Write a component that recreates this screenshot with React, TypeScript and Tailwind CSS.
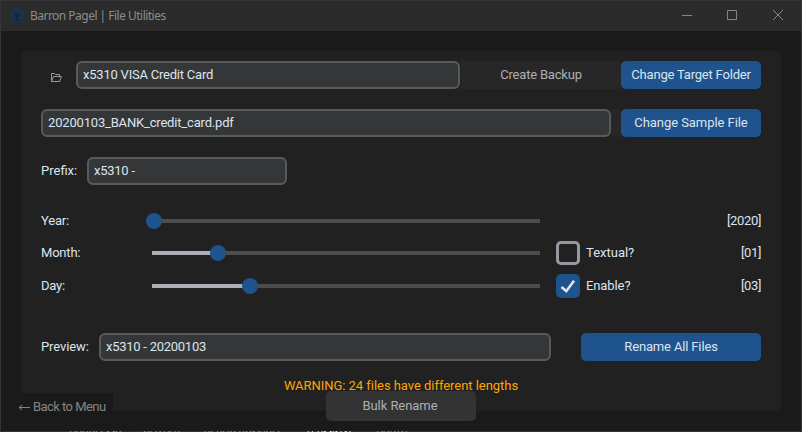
import React from "react";

function Field({ value, className }: { value: string; className: string }) {
  return (
    <div className={`flex h-7 items-center rounded-[6px] border-2 border-[#565b5e] bg-[#343638] pl-[5px] ${className}`}>
      {value}
    </div>
  );
}

function Button({ children, className }: { children: React.ReactNode; className: string }) {
  return (
    <button className={`flex h-7 items-center justify-center rounded-[5px] bg-[#1f538d] text-[#dce4ee] ${className}`}>
      {children}
    </button>
  );
}

function Slider({ value }: { value: number }) {
  return (
    <div className="relative flex h-4 w-[388px] items-center">
      <div className="h-1 w-full bg-[#4a4d50]">
        <div className="h-1 bg-[#aab0b5]" style={{ width: value }} />
      </div>
      <div className="absolute top-0 size-4 -translate-x-1/2 rounded-full bg-[#1f538d]" style={{ left: value }} />
    </div>
  );
}

function SliderRow({ label, value, reading, children }: { label: string; value: number; reading: string; children?: React.ReactNode }) {
  return (
    <div className="flex h-6 items-center">
      <div className="w-[111px] tracking-[-0.2px]">{label}</div>
      <Slider value={value} />
      <div className="ml-4 flex items-center gap-1.5">{children}</div>
      <div className="ml-auto tracking-[-0.35px]">{reading}</div>
    </div>
  );
}

export default function App() {
  return (
    <div className="relative h-[432px] w-[802px] overflow-hidden font-['Roboto',sans-serif] text-[13px] leading-4 text-[#dce4ee]">
      <div className="h-[432px] border border-[#353535] bg-[#1a1a1a]">
        <header className="flex h-[30px] items-center bg-[#2b2b2b] pl-2 text-[#8c8c8c]">
          <svg className="size-4" viewBox="0 0 16 16" fill="none">
            <circle cx="8" cy="7.5" r="7.5" fill="#19324e" />
            <path d="M8 13V7M8 9.5L4.5 7M8 9l3.5-2.5M8 7L6 4M8 7l2-3M5 12.5h6" stroke="#0c2240" strokeWidth="1" />
          </svg>
          <span className="ml-[5px] font-['Noto_Sans',sans-serif] text-xs tracking-[-0.52px]">Barron Pagel | File Utilities</span>
          <svg className="ml-auto mr-3 h-4 w-[112px]" viewBox="0 0 112 16" fill="none" stroke="#858585">
            <path d="M5 7.5h10M50.5 2.5h9v9h-9zM96 2l10 10M106 2l-10 10" />
          </svg>
        </header>
        <main className="mx-5 mt-5 flex h-[360px] flex-col rounded-[5px] bg-[#212121] px-5 pt-2.5">
          <div className="flex h-7 items-center">
            <svg className="ml-[10px] mt-1 h-[9px] w-[11px]" viewBox="0 0 11 9" fill="none" stroke="#9a9a9a">
              <path d="M.5 8.5v-8h3l1 1h4v2M.5 8.5h8l2-5h-8z" />
            </svg>
            <Field value="x5310 VISA Credit Card" className="ml-[14px] w-[384px] tracking-[-0.22px]" />
            <div className="ml-px flex h-7 w-[160px] items-center justify-center bg-[#272727] tracking-[-0.2px] text-[#adb0b3]">Create Backup</div>
            <Button className="w-[140px] tracking-[-0.2px]">Change Target Folder</Button>
          </div>
          <div className="mt-5 flex">
            <Field value="20200103_BANK_credit_card.pdf" className="w-[570px] tracking-[-0.18px]" />
            <div className="h-7 w-2.5 bg-[#272727]" />
            <Button className="w-[140px] tracking-[-0.06px]">Change Sample File</Button>
          </div>
          <div className="mt-5 flex items-center">
            <span className="w-[46px]">Prefix:</span>
            <Field value="x5310 -" className="w-[200px] tracking-[-0.25px]" />
          </div>
          <div className="mt-6 flex flex-col">
            <SliderRow label="Year:" value={2} reading="[2020]" />
            <div className="h-2" />
            <SliderRow label="Month:" value={66} reading="[01]">
              <span className="size-6 rounded-[5px] border-[3px] border-[#949a9f]" />
              <span>Textual?</span>
            </SliderRow>
            <div className="h-[9px]" />
            <SliderRow label="Day:" value={98} reading="[03]">
              <svg className="size-6 rounded-[5px] bg-[#1f538d]" viewBox="0 0 24 24" fill="none">
                <path d="M5.5 13l4.8 4.2L18 6.7" stroke="#dce4ee" strokeWidth="2.6" />
              </svg>
              <span className="tracking-[-0.1px]">Enable?</span>
            </SliderRow>
          </div>
          <div className="mt-[35px] flex items-center">
            <span className="w-[58px] tracking-[-0.1px]">Preview:</span>
            <Field value="x5310 - 20200103" className="w-[452px] tracking-[-0.26px]" />
            <Button className="ml-auto w-[180px] tracking-[-0.15px]">Rename All Files</Button>
          </div>
          <div className="mt-[17px] text-center tracking-[-0.04px] text-[#ffa500]">WARNING: 24 files have different lengths</div>
        </main>
      </div>
      <div className="absolute left-[15px] top-[393px] flex h-[27px] w-[98px] items-center whitespace-nowrap bg-[#1a1a1a] pl-[3px] tracking-[-0.55px] text-[#858585]">
        <svg className="mr-[3px] mt-0.5 h-[7px] w-3 shrink-0" viewBox="0 0 12 7" fill="none" stroke="currentColor"><path d="M12 3.5H1M4 1L1 3.5 4 6" /></svg>
        Back to Menu
      </div>
      <button className="absolute left-[326px] top-[391px] h-[30px] w-[150px] rounded-[5px] bg-[#333333] pr-0.5 tracking-[-0.05px] text-[#adb0b3]">Bulk Rename</button>
      <div className="absolute left-[69px] top-[431px] flex h-px gap-[22px] overflow-hidden text-[11px] leading-none tracking-[-0.55px] text-[#999]">
        {["PROBLEMS", "OUTPUT", "DEBUG CONSOLE", "TERMINAL", "PORTS"].map((tab) => (
          <span key={tab} className={`-mt-[2px] ${tab === "TERMINAL" ? "text-[#ddd]" : ""}`}>{tab}</span>
        ))}
      </div>
    </div>
  );
}
